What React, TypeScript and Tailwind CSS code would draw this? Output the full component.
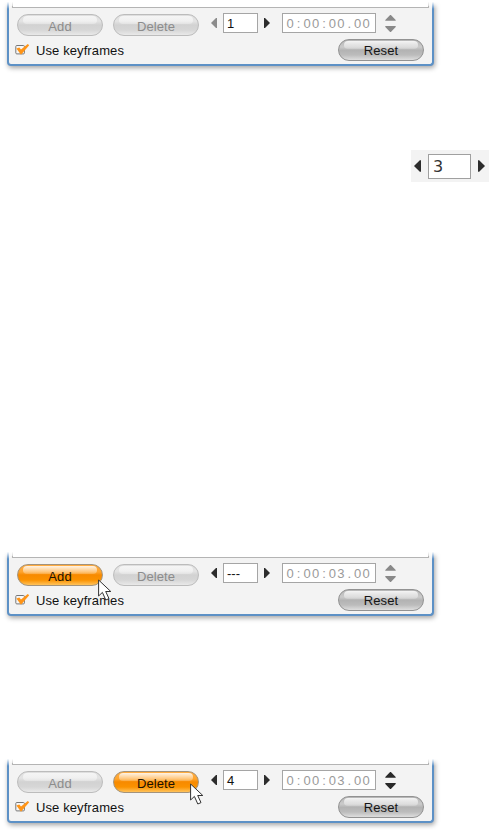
import type { ReactNode } from "react";

type Tone = "disabled" | "active" | "normal";

const tones: Record<Tone, string> = {
  disabled:
    "border-[#bcbcbc] text-[#8c8c8c] bg-[linear-gradient(#dedede_0%,#e4e4e4_30%,#d2d2d2_50%,#d6d6d6_75%,#e9e9e9_100%)]",
  active:
    "border-[#a3937c] text-[#1c1204] bg-[linear-gradient(#ffac40_0%,#ffa42c_35%,#f78a00_50%,#fb9200_75%,#ffc35c_100%)]",
  normal:
    "border-[#929292] text-[#151515] bg-[linear-gradient(#b6b6b6_0%,#cbcbcb_35%,#b3b3b3_52%,#bcbcbc_75%,#dedede_100%)]",
};

function Pill({ tone, children }: { tone: Tone; children: ReactNode }) {
  return (
    <button
      className={`h-[22px] w-[86px] shrink-0 rounded-full border text-[13px] tracking-[0.1px] ${tones[tone]}`}
    >
      <span className="relative flex h-full items-center justify-center">
        <span
          className={`absolute inset-x-[5px] top-[1px] h-[8px] rounded-full bg-gradient-to-b ${tone === "disabled" ? "from-white/70 to-white/30" : "from-white/85 to-white/20"}`}
        />
        <span className={`relative leading-[20px] ${tone === "normal" ? "pt-[2px]" : "pt-[4px]"}`}>{children}</span>
      </span>
    </button>
  );
}

function Arrow({ dir, muted, large }: { dir: "left" | "right"; muted?: boolean; large?: boolean }) {
  return (
    <svg
      viewBox="0 0 6 10"
      className={`shrink-0 ${large ? "h-[12px] w-[7px]" : "h-[10px] w-[6px]"} ${muted ? "fill-[#8c8c8c]" : "fill-[#2c2c2c]"}`}
    >
      <path d={dir === "left" ? "M6 0V10H5L0 5L5 0Z" : "M0 0V10H1L6 5L1 0Z"} />
    </svg>
  );
}

function Spinner({ muted }: { muted: boolean }) {
  return (
    <svg viewBox="0 0 11 17" className={`ml-[9px] h-[17px] w-[11px] ${muted ? "fill-[#898989]" : "fill-[#292929]"}`}>
      <path d="M.3 5.7V4.9L5.1 0H5.9L10.7 4.9V5.7ZM.3 11.1V11.9L5.1 17H5.9L10.7 11.9V11.1Z" />
    </svg>
  );
}

function Check() {
  return (
    <svg viewBox="0 0 15 13" className="h-[13px] w-[15px]">
      <rect x="0.8" y="1.5" width="8.6" height="8.4" rx="1" fill="#f7f7f7" stroke="#777" />
      <path d="M1.4 4.4L4.3 3.6L6 5.4L12.8 0L14.2 1.3L6 10.7Z" fill="#ff9416" />
    </svg>
  );
}

function Cursor({ className }: { className: string }) {
  return (
    <svg viewBox="0 0 14 22" className={`absolute h-[22px] w-[14px] ${className}`}>
      <path d="M.6 1V17L4.4 13.4L7.8 21L11 19.6L7.7 12.5H12.8Z" fill="#fff" stroke="#333" />
    </svg>
  );
}

interface PanelProps {
  className: string;
  add: Tone;
  del: Tone;
  frame: string;
  time: string;
  first?: boolean;
  spinnerOn?: boolean;
  cursor?: ReactNode;
}

function Panel({ className, add, del, frame, time, first = false, spinnerOn = false, cursor }: PanelProps) {
  return (
    <section className={`relative ml-[7px] h-[66px] w-[427px] ${className}`}>
      <div className="flex h-full flex-col rounded-b-[4px] border-x-2 border-b-2 border-[#5d91c6] bg-[#f3f3f3] px-[3px] shadow-[1px_2px_5px_0px_rgba(0,0,0,0.36)]">
        <div className="h-[8px] shrink-0 border-x border-b border-[#b4b4b4] bg-white" />
        <div className="flex h-[30px] items-start pl-[5px] pt-[5px]">
          <div className="flex gap-[10px] pt-[1px]">
            <Pill tone={add}>Add</Pill>
            <Pill tone={del}>Delete</Pill>
          </div>
          <div className="ml-[12px] flex h-[20px] items-center">
            <Arrow dir="left" muted={first} />
            <div className="ml-[6px] mr-[6px] h-[20px] w-[35px] border border-[#a5a5a5] bg-white pl-[3px] text-[13px] leading-[19px] text-[#111]">
              {frame}
            </div>
            <Arrow dir="right" />
            <div className="ml-[12px] flex h-[20px] w-[94px] border border-[#a5a5a5] bg-white pl-[3px] text-[13px] leading-[19px] text-[#9a9a9a]">
              {time.split("").map((c, i) => (
                <span key={i} className="w-[8.44px] shrink-0 text-center">
                  {c}
                </span>
              ))}
            </div>
            <Spinner muted={!spinnerOn} />
          </div>
        </div>
        <div className="flex items-start justify-between pl-[3px] pr-[5px] pt-px">
          <label className="flex h-[22px] items-center">
            <Check />
            <span className="ml-[6px] pt-[2px] text-[13px] leading-[22px] tracking-[0.1px] text-[#111]">Use keyframes</span>
          </label>
          <Pill tone="normal">Reset</Pill>
        </div>
      </div>
      <div className="absolute -inset-x-[7px] -top-[7px] h-[16px] bg-[linear-gradient(white_0%,white_55%,transparent_100%)] [clip-path:polygon(0_0,100%_0,100%_100%,430px_100%,430px_13px,11px_13px,11px_100%,0_100%)]" />
      {cursor}
    </section>
  );
}

export default function App() {
  return (
    <main className="flex h-[830px] w-[489px] flex-col overflow-hidden bg-white font-['Liberation_Sans',Arial,sans-serif]">
      <Panel className="" add="disabled" del="disabled" frame="1" time="0:00:00.00" first />
      <div className="mt-[84px] flex h-[32px] w-[78px] items-center self-end bg-[#f3f3f3] pl-[3px]">
        <Arrow dir="left" large />
        <div className="mx-[7px] h-[25px] w-[43px] border border-[#a0a0a0] bg-white pl-[4px] font-['DejaVu_Sans',sans-serif] text-[16px] leading-[23px] text-[#333]">
          3
        </div>
        <Arrow dir="right" large />
      </div>
      <Panel
        className="mt-[368px]"
        add="active"
        del="disabled"
        frame="---"
        time="0:00:03.00"
        cursor={<Cursor className="left-[91px] top-[29px]" />}
      />
      <Panel
        className="mt-[141px]"
        add="disabled"
        del="active"
        frame="4"
        time="0:00:03.00"
        spinnerOn
        cursor={<Cursor className="left-[183px] top-[26px]" />}
      />
    </main>
  );
}
